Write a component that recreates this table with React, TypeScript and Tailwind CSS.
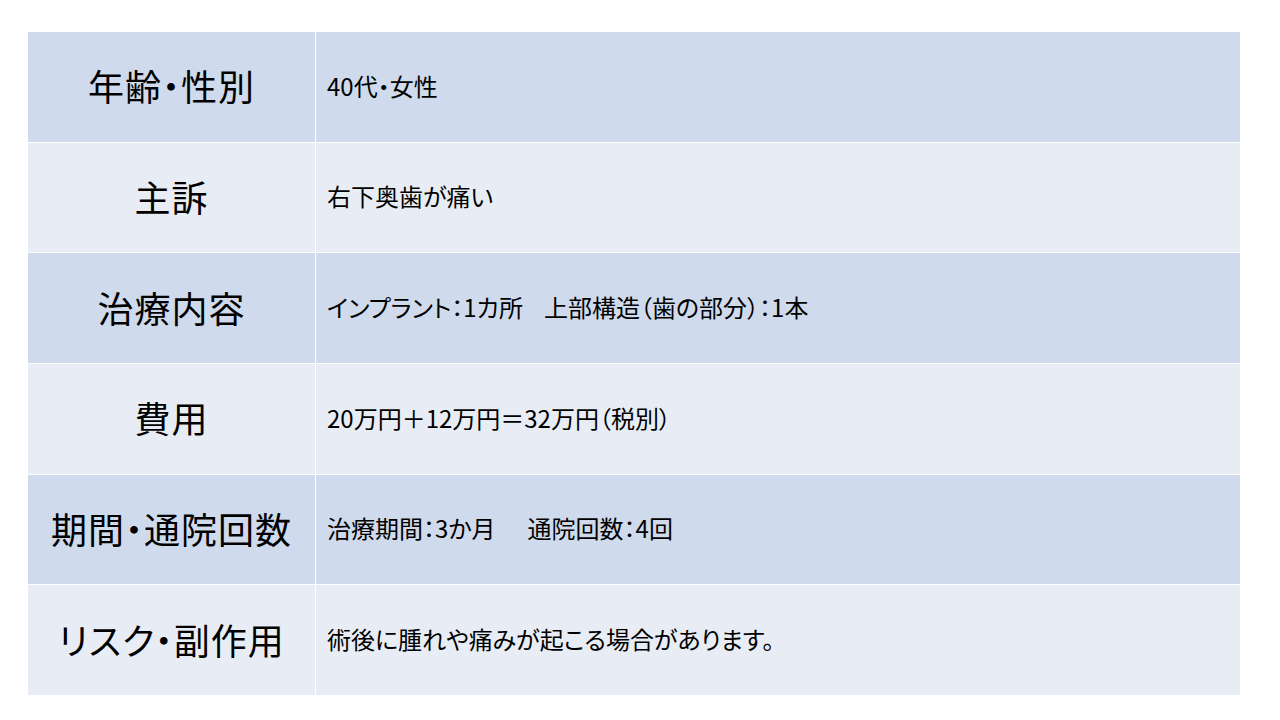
import React from "react";

const rows: { head: string; body: React.ReactNode; dark: boolean }[] = [
  { head: "年齢・性別", body: "40代・女性", dark: true },
  { head: "主訴", body: "右下奥歯が痛い", dark: false },
  {
    head: "治療内容",
    body: (
      <>
        <span>インプラント：1カ所</span>
        <span className="ml-[21px]">上部構造（歯の部分）：1本</span>
      </>
    ),
    dark: true,
  },
  { head: "費用", body: "20万円＋12万円＝32万円（税別）", dark: false },
  {
    head: "期間・通院回数",
    body: (
      <>
        <span>治療期間：3か月</span>
        <span className="ml-[32px]">通院回数：4回</span>
      </>
    ),
    dark: true,
  },
  { head: "リスク・副作用", body: "術後に腫れや痛みが起こる場合があります。", dark: false },
];

export default function App() {
  return (
    <div
      className="w-[1280px] h-[720px] bg-white pt-[32px] pl-[28px] text-black [font-feature-settings:'palt']"
      style={{ fontFamily: '"Noto Sans CJK JP", "Noto Sans", sans-serif' }}
    >
      <div className="w-[1212px] h-[663px] grid grid-rows-6 gap-y-px">
        {rows.map((r, i) => (
          <div key={i} className="grid grid-cols-[287px_1fr] gap-x-px">
            <div
              className={`flex items-center justify-center pb-[3px] text-[36px] leading-none tracking-[1px] ${
                r.dark ? "bg-[#cfdaec]" : "bg-[#e8edf5]"
              }`}
            >
              {r.head}
            </div>
            <div
              className={`flex items-center pl-[11px] pb-[2px] text-[24px] leading-none ${
                r.dark ? "bg-[#cfdaec]" : "bg-[#e8edf5]"
              }`}
            >
              <div className="flex items-center">{r.body}</div>
            </div>
          </div>
        ))}
      </div>
    </div>
  );
}
